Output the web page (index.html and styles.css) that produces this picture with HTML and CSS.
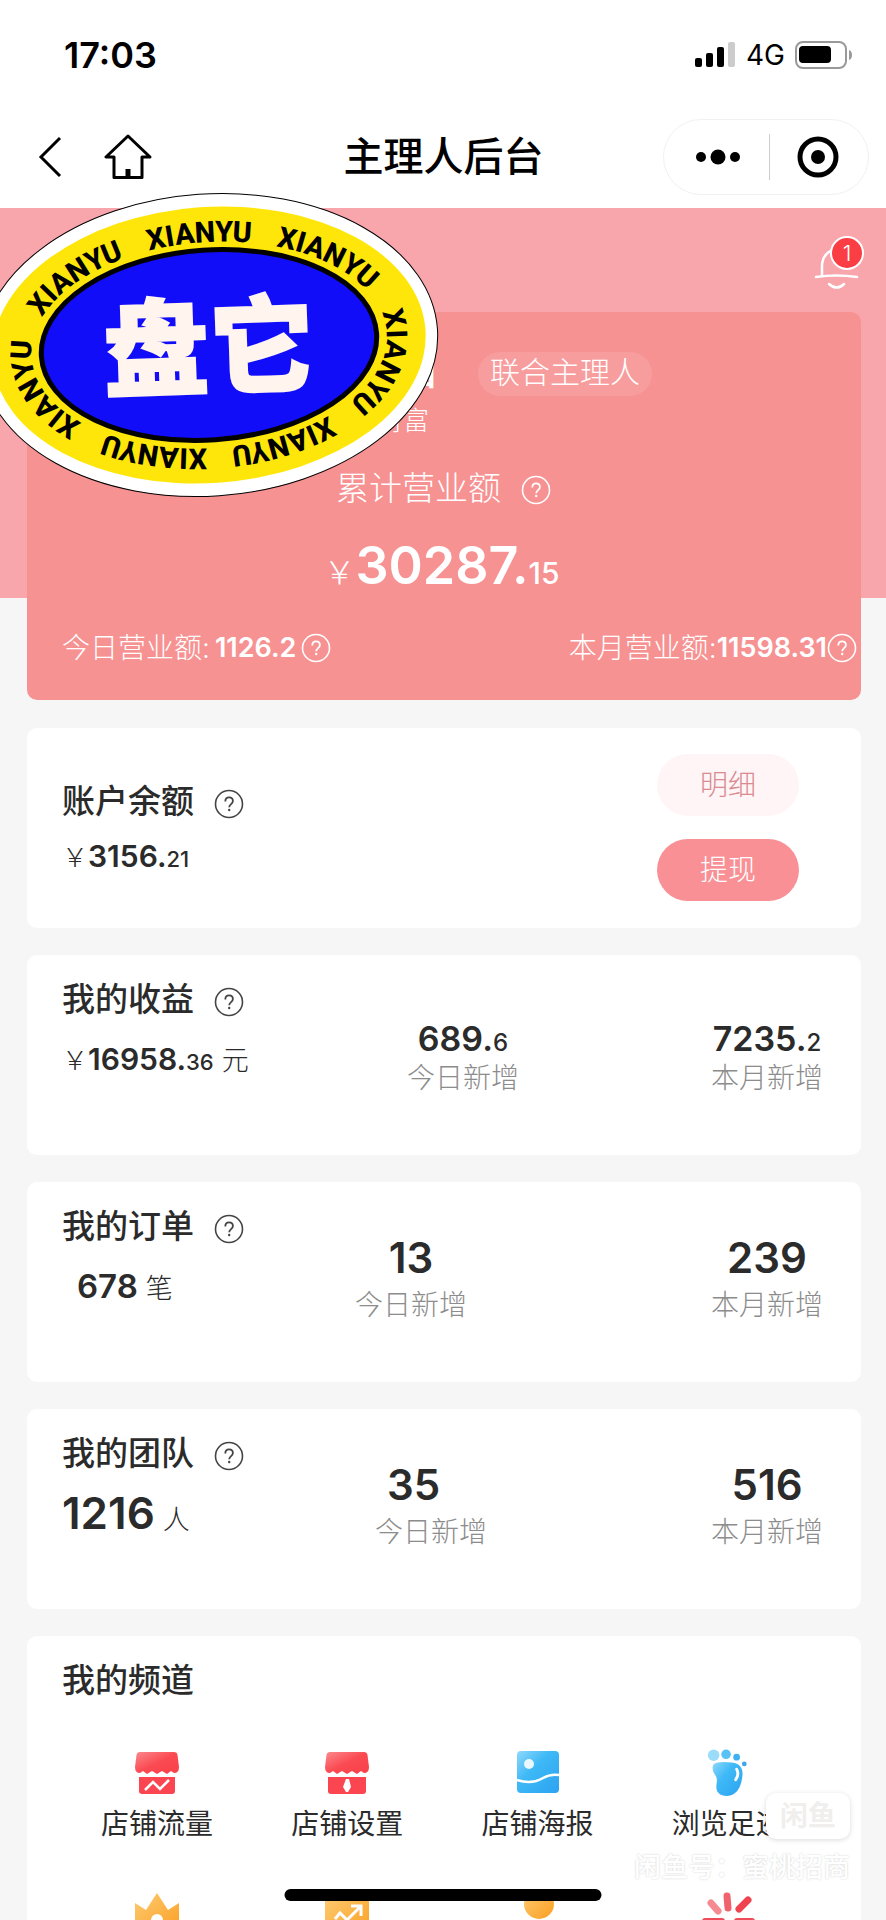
FILE: index.html
```html
<!DOCTYPE html>
<html lang="zh-CN">
<head>
    <meta charset="UTF-8">
    <meta name="viewport" content="width=device-width, initial-scale=1.0">
    <title>主理人后台</title>
    <link rel="stylesheet" href="styles.css">
</head>
<body>

    <!-- Shared icons -->
    <svg class="defs" width="0" height="0" aria-hidden="true">
        <defs>
            <linearGradient id="red" x1="0" y1="0" x2="1" y2="1">
                <stop offset="0" stop-color="#f98a8e"/>
                <stop offset="0.5" stop-color="#fb4a52"/>
                <stop offset="1" stop-color="#f8404a"/>
            </linearGradient>
            <linearGradient id="blue" x1="0" y1="0" x2="1" y2="1">
                <stop offset="0" stop-color="#8fd8fb"/>
                <stop offset="0.4" stop-color="#3fb9f6"/>
                <stop offset="1" stop-color="#2ba2f2"/>
            </linearGradient>
            <linearGradient id="gold" x1="0" y1="0" x2="1" y2="1">
                <stop offset="0" stop-color="#fdcb72"/>
                <stop offset="1" stop-color="#fb9f22"/>
            </linearGradient>
            <symbol id="help" viewBox="0 0 30 30">
                <circle cx="15" cy="15" r="13.5" fill="none" stroke="currentColor" stroke-width="1.6"/>
                <path d="M11.3 12.4c0-2.4 1.5-4 3.8-4s3.8 1.5 3.8 3.6c0 3-3.7 3.2-3.7 6.3" fill="none" stroke="currentColor" stroke-width="1.8"/>
                <circle cx="15.2" cy="21" r="1.2" fill="currentColor"/>
            </symbol>
        </defs>
    </svg>

    <div class="app">

        <!-- Status bar -->
        <div class="status-bar">
            <span class="time">17:03</span>
            <div class="status-right">
                <svg width="42" height="26" viewBox="0 0 42 26">
                    <rect x="1" y="16" width="7" height="9" rx="2"/>
                    <rect x="12" y="11" width="7" height="14" rx="2"/>
                    <rect x="23" y="5" width="7" height="20" rx="2"/>
                    <rect x="34" y="0" width="7" height="25" rx="2" fill="#ccc"/>
                </svg>
                <span class="network">4G</span>
                <svg width="58" height="28" viewBox="0 0 58 28">
                    <rect x="1" y="1" width="50" height="26" rx="7" fill="none" stroke="#999" stroke-width="2"/>
                    <rect x="4" y="5" width="32" height="17" rx="4"/>
                    <path d="M54 9c4 1 4 9 0 10z" fill="#999"/>
                </svg>
            </div>
        </div>

        <!-- Navigation -->
        <header class="nav">
            <div class="nav-left">
                <button class="icon-btn" aria-label="返回">
                    <svg width="24" height="42" viewBox="0 0 24 42" fill="none" stroke="#000" stroke-width="3">
                        <path d="M22 2 3 21l19 19"/>
                    </svg>
                </button>
                <button class="icon-btn" aria-label="首页">
                    <svg width="48" height="46" viewBox="0 0 48 46" fill="none" stroke="#000" stroke-width="3" stroke-linejoin="round">
                        <path d="M24 2 2 23h8v20.500h28V23h8z"/>
                        <path d="M24 35v8" stroke-width="5"/>
                    </svg>
                </button>
            </div>
            <h1>主理人后台</h1>
            <div class="capsule">
                <button class="icon-btn" aria-label="更多">
                    <svg width="46" height="16" viewBox="0 0 46 16">
                        <circle cx="6" cy="8" r="5"/>
                        <circle cx="23" cy="8" r="7.500"/>
                        <circle cx="40" cy="8" r="5"/>
                    </svg>
                </button>
                <span class="capsule-line"></span>
                <button class="icon-btn" aria-label="关闭">
                    <svg width="42" height="42" viewBox="0 0 42 42">
                        <circle cx="21" cy="21" r="18" fill="none" stroke="#000" stroke-width="5"/>
                        <circle cx="21" cy="21" r="7"/>
                    </svg>
                </button>
            </div>
        </header>

        <main>
            <div class="banner">
                <button class="bell icon-btn" aria-label="消息">
                    <svg width="46" height="42" viewBox="0 0 46 42" fill="none" stroke="#fff" stroke-width="2.500" stroke-linecap="round">
                        <path d="M2 29q20-3 41 0"/>
                        <path d="M8 27V18C8 9 14 2 22 2"/>
                        <path d="M15 36q8 7 15 0"/>
                    </svg>
                    <span class="bell-count">1</span>
                </button>
            </div>

            <!-- Total revenue -->
            <section class="hero">
                <div class="profile">
                    <b class="profile-name">目</b>
                    <span class="role">联合主理人</span>
                </div>
                <p class="motto">财富</p>
                <h2 class="hero-title">累计营业额 <svg class="help"><use href="#help"/></svg></h2>
                <p class="hero-amount"><span class="yen">&#65509;</span><b>30287.</b><small>15</small></p>
                <div class="hero-row">
                    <span class="today">今日营业额:<b>1126.2</b><svg class="help"><use href="#help"/></svg></span>
                    <span>本月营业额:<b>11598.31</b><svg class="help"><use href="#help"/></svg></span>
                </div>
            </section>

            <!-- Balance -->
            <section class="card balance">
                <div>
                    <h2>账户余额 <svg class="help"><use href="#help"/></svg></h2>
                    <p class="amount"><span class="yen">&#65509;</span><b>3156.</b><small>21</small></p>
                </div>
                <div class="balance-btns">
                    <button class="btn btn-light">明细</button>
                    <button class="btn">提现</button>
                </div>
            </section>

            <!-- Income -->
            <section class="card income">
                <div class="card-main">
                    <h2>我的收益 <svg class="help"><use href="#help"/></svg></h2>
                    <p class="amount"><span class="yen">&#65509;</span><b>16958.</b><small>36</small><span class="unit">元</span></p>
                </div>
                <div class="stat stat-decimal">
                    <p class="num">689.<small>6</small></p>
                    <p class="label">今日新增</p>
                </div>
                <div class="stat stat-decimal stat-month">
                    <p class="num">7235.<small>2</small></p>
                    <p class="label">本月新增</p>
                </div>
            </section>

            <!-- Orders -->
            <section class="card orders">
                <div class="card-main">
                    <h2>我的订单 <svg class="help"><use href="#help"/></svg></h2>
                    <p class="amount"><b>678</b><span class="unit">笔</span></p>
                </div>
                <div class="stat">
                    <p class="num">13</p>
                    <p class="label">今日新增</p>
                </div>
                <div class="stat stat-month">
                    <p class="num">239</p>
                    <p class="label">本月新增</p>
                </div>
            </section>

            <!-- Team -->
            <section class="card team">
                <div class="card-main">
                    <h2>我的团队 <svg class="help"><use href="#help"/></svg></h2>
                    <p class="amount"><b>1216</b><span class="unit">人</span></p>
                </div>
                <div class="stat stat-left">
                    <p class="num">35</p>
                    <p class="label">今日新增</p>
                </div>
                <div class="stat stat-month">
                    <p class="num">516</p>
                    <p class="label">本月新增</p>
                </div>
            </section>

            <!-- Channels -->
            <section class="card channels">
                <h2>我的频道</h2>
                <div class="channel-grid">
                    <a class="channel" href="#traffic">
                        <svg viewBox="0 0 46 46">
                            <path d="M6 2h34q3 0 3.500 3L45 17q0 6-5 6l-3-2-4 3-5-3-5 3-5-3-5 3-4-3-3 2q-5 0-5-6L2.500 5Q3 2 6 2z" fill="url(#red)"/>
                            <path d="M5 27h36v14q0 3-3 3H8q-3 0-3-3z" fill="#fb4651"/>
                            <path d="m11 40 8-8 7 7 9-9" fill="none" stroke="#fff" stroke-width="2.500"/>
                        </svg>
                        店铺流量
                    </a>
                    <a class="channel" href="#settings">
                        <svg viewBox="0 0 46 46">
                            <path d="M6 2h34q3 0 3.500 3L45 17q0 6-5 6l-3-2-4 3-5-3-5 3-5-3-5 3-4-3-3 2q-5 0-5-6L2.500 5Q3 2 6 2z" fill="url(#red)"/>
                            <path d="M4 27h38v14q0 3-3 3H7q-3 0-3-3z" fill="#fb4651"/>
                            <path d="M22 29h3l2 8-3 5h-2l-3-5z" fill="#fff"/>
                        </svg>
                        店铺设置
                    </a>
                    <a class="channel" href="#poster">
                        <svg viewBox="0 0 46 46">
                            <rect x="2" y="1" width="42" height="42" rx="4" fill="url(#blue)"/>
                            <circle cx="14" cy="14" r="5" fill="#e9f8fe"/>
                            <path d="M2 30c9 3 18 3 26-2 5-3 10-4 16-3" fill="none" stroke="#fff" stroke-width="2.500"/>
                        </svg>
                        店铺海报
                    </a>
                    <a class="channel" href="#history">
                        <svg viewBox="0 0 46 48">
                            <circle cx="8" cy="5.500" r="6" fill="#9bdcf9"/>
                            <circle cx="21" cy="4.500" r="5" fill="#58c1f5"/>
                            <circle cx="32" cy="7.500" r="3.500" fill="#3fb0f2"/>
                            <circle cx="40" cy="14.500" r="2.500" fill="#3fa6ea"/>
                            <path d="M8 15c3-3 12-3 19-2 9 1 12 7 11 14-1 11-6 21-16 21-9 0-12-5-11-12 1-6 0-8-2-11-2-2-3-8-1-10z" fill="url(#blue)"/>
                            <path d="M32 20q3 5-1 11" fill="none" stroke="#fff" stroke-width="3" stroke-linecap="round"/>
                        </svg>
                        浏览足迹
                    </a>
                    <a class="channel" href="#member" aria-label="会员">
                        <svg viewBox="0 0 46 46">
                            <path d="m1 11 11 7L23 1l11 17 11-7v30H1z" fill="url(#gold)"/>
                            <circle cx="23" cy="28" r="6" fill="#fff"/>
                        </svg>
                    </a>
                    <a class="channel" href="#growth" aria-label="增长">
                        <svg viewBox="0 0 46 46">
                            <rect x="1" y="3" width="44" height="42" rx="3" fill="url(#gold)"/>
                            <path d="m11 27 5-6 7 7 14-14M27 14h10v10" fill="none" stroke="#fff" stroke-width="3"/>
                        </svg>
                    </a>
                    <a class="channel" href="#friends" aria-label="好友">
                        <svg viewBox="0 0 46 46">
                            <circle cx="24" cy="12" r="15" fill="url(#gold)"/>
                            <path d="M3 45q20-26 40 0z" fill="#fb9f22"/>
                        </svg>
                    </a>
                    <a class="channel" href="#activity" aria-label="活动">
                        <svg viewBox="0 0 46 46" fill="none" stroke-linecap="round" stroke-width="7">
                            <path d="m6 11 7 8" stroke="#f58a90"/>
                            <path d="m22 4 1 12" stroke="#f0626c"/>
                            <path d="m43 8-9 9" stroke="#ef4450"/>
                            <path d="M0 29h17M32 29h15" stroke="#ee4c58" stroke-width="6"/>
                        </svg>
                    </a>
                </div>
            </section>
        </main>

        <!-- Sticker -->
        <svg class="sticker" width="464" height="310" viewBox="-232 -155 464 310">
            <defs>
                <path id="ring" d="M0 103A178 103 0 0 1 0-103A178 103 0 0 1 0 103"/>
            </defs>
            <g transform="rotate(-4)">
                <ellipse rx="229" ry="151" fill="#fff" stroke="#000"/>
                <ellipse rx="217" ry="138" fill="#ffe60a"/>
                <ellipse rx="168" ry="95" fill="#110df8" stroke="#000" stroke-width="5"/>
                <g class="ring-text">
                    <text><textPath href="#ring" startOffset="61">XIANYU</textPath></text>
                    <text><textPath href="#ring" startOffset="190">XIANYU</textPath></text>
                    <text><textPath href="#ring" startOffset="318">XIANYU</textPath></text>
                    <text><textPath href="#ring" startOffset="447">XIANYU</textPath></text>
                    <text><textPath href="#ring" startOffset="575">XIANYU</textPath></text>
                    <text><textPath href="#ring" startOffset="704">XIANYU</textPath></text>
                    <text><textPath href="#ring" startOffset="832">XIANYU</textPath></text>
                </g>
                <text class="sticker-text" x="0" y="41" transform="rotate(2)">盘它</text>
            </g>
        </svg>

        <div class="watermark">
            <span class="watermark-logo">闲鱼</span>
            <span class="watermark-id">闲鱼号：蜜桃招商</span>
        </div>

        <div class="home-bar"></div>
    </div>

</body>
</html>
```
FILE: styles.css
```css
/* General Reset */
* {
    margin: 0;
    padding: 0;
    box-sizing: border-box;
}

body {
    font-family: Inter, "Noto Sans CJK SC", sans-serif;
    font-size: 28px;
    font-weight: 300;
    line-height: 40px;
    color: #2b2b2b;
    background-color: #f6f6f6;
}

button {
    font: inherit;
    border: none;
    background: none;
    cursor: pointer;
}

svg {
    display: block;
    flex: none;
}

.defs {
    position: absolute;
}

.app {
    position: relative;
    height: 100vh;
    overflow: hidden;
}

/* Status Bar */
.status-bar {
    display: flex;
    justify-content: space-between;
    align-items: center;
    height: 110px;
    padding: 0 33px 0 64px;
    background-color: #fff;
    color: #000;
}

.time {
    font-size: 36px;
    font-weight: 600;
}

.status-right {
    display: flex;
    align-items: center;
    gap: 10px;
}

.network {
    font-size: 28px;
    font-weight: 400;
}

/* Navigation */
.nav {
    display: grid;
    grid-template-columns: 1fr auto 1fr;
    align-items: center;
    height: 98px;
    padding: 0 17px 4px 38px;
    background-color: #fff;
    color: #000;
}

.nav h1 {
    padding-right: 20px;
    font-size: 40px;
    font-weight: 500;
}

.nav-left {
    display: flex;
    align-items: center;
    gap: 42px;
}

.icon-btn {
    display: flex;
}

.capsule {
    display: flex;
    align-items: center;
    justify-content: space-between;
    justify-self: end;
    width: 206px;
    height: 76px;
    padding: 0 29px 0 31px;
    border: 1px solid #f1f1f1;
    border-radius: 38px;
}

.capsule-line {
    width: 1px;
    height: 46px;
    background-color: #ccc;
}

/* Banner */
.banner {
    display: flex;
    justify-content: flex-end;
    height: 390px;
    padding: 36px 26px;
    background-color: #f8a5ac;
}

.bell {
    position: relative;
    align-self: flex-start;
    padding-top: 4px;
}

.bell-count {
    position: absolute;
    top: -8px;
    right: -4px;
    width: 34px;
    height: 34px;
    border: 2px solid #fff;
    border-radius: 50%;
    background-color: #fa3e44;
    color: #fff;
    font-size: 22px;
    line-height: 30px;
}

.help {
    width: 30px;
    height: 30px;
}

/* Revenue card */
.hero {
    margin: -286px 25px 28px 27px;
    padding: 40px 4px 32px 35px;
    border-radius: 10px;
    background-color: #f79293;
    color: #fff;
}

.profile {
    display: flex;
    align-items: center;
    gap: 40px;
    padding-left: 344px;
}

.profile-name {
    font-size: 32px;
    font-weight: 700;
}

.role {
    height: 44px;
    padding: 0 12px;
    border-radius: 22px;
    background-color: rgba(255, 255, 255, 0.1);
    font-size: 30px;
    line-height: 40px;
}

.motto {
    padding-left: 315px;
    font-size: 26px;
    line-height: 50px;
}

.hero-title {
    display: flex;
    align-items: center;
    justify-content: center;
    gap: 20px;
    margin: 22px 32px 0 0;
    font-size: 33px;
    font-weight: 300;
}

.hero-title .help {
    margin-top: 4px;
}

.hero-amount {
    display: flex;
    align-items: baseline;
    justify-content: center;
    margin: 28px 36px 0 0;
    line-height: 60px;
}

.hero-amount b {
    font-size: 52px;
    font-weight: 600;
}

.hero-amount small {
    font-size: 30px;
    font-weight: 500;
}

.hero-amount .yen {
    font-size: 32px;
}

.hero-row {
    display: flex;
    justify-content: space-between;
    margin-top: 25px;
}

.hero-row span {
    display: flex;
    align-items: center;
}

.hero-row b {
    font-size: 27px;
    font-weight: 600;
}

.hero-row .today b {
    margin: 0 5px;
}

/* Cards */
.card {
    display: flex;
    min-height: 200px;
    margin: 0 25px 27px 27px;
    padding: 26px 38px 0 35px;
    border-radius: 10px;
    background-color: #fff;
}

.card h2 {
    display: flex;
    align-items: center;
    gap: 20px;
    height: 36px;
    font-size: 33px;
    font-weight: 500;
    line-height: 36px;
}

.card h2 .help {
    margin-top: 6px;
    color: #444;
}

.amount {
    display: flex;
    align-items: baseline;
    margin-top: 22px;
}

.amount b {
    font-size: 30px;
    font-weight: 600;
}

.amount small {
    font-size: 22px;
    font-weight: 500;
}

.yen {
    font-family: "Noto Sans CJK SC", sans-serif;
    font-size: 26px;
}

.unit {
    margin-left: 8px;
    font-size: 27px;
}

.stat {
    padding-top: 26px;
    text-align: center;
}

.stat-month {
    margin-left: auto;
}

.num {
    height: 51px;
    font-size: 42px;
    font-weight: 600;
    line-height: 48px;
}

.stat-decimal .num {
    padding-top: 13px;
    font-size: 34px;
    line-height: 38px;
}

.stat-left .num {
    padding-left: 12px;
    text-align: left;
}

.num small {
    font-size: 24px;
    font-weight: 500;
}

.label {
    color: #8c8c8c;
}

/* Balance */
.balance {
    justify-content: space-between;
    padding-right: 62px;
}

.balance h2 {
    margin-top: 29px;
}

.balance .amount {
    margin-top: 17px;
}

.balance-btns {
    display: flex;
    flex-direction: column;
    gap: 23px;
}

.btn {
    width: 142px;
    height: 62px;
    border-radius: 31px;
    background-color: #f89095;
    color: #fff;
}

.btn-light {
    background-color: #fff5f6;
    color: #d98a92;
}

.income .card-main {
    flex: 0 0 345px;
}

.orders .card-main {
    flex: 0 0 293px;
}

.orders .amount {
    padding-left: 15px;
}

.orders .amount b {
    font-size: 33px;
}

.team .card-main {
    flex: 0 0 313px;
}

.team .amount b {
    font-size: 44px;
}

/* Channels */
.channels {
    flex-direction: column;
}

.channel-grid {
    display: grid;
    grid-template-columns: repeat(4, 1fr);
    row-gap: 48px;
    margin-top: 52px;
}

.channel {
    display: flex;
    flex-direction: column;
    align-items: center;
    gap: 8px;
    color: #2b2b2b;
    font-weight: 400;
    text-decoration: none;
}

.channel svg {
    width: 46px;
    height: 46px;
    overflow: visible;
}

/* Sticker */
.sticker {
    position: absolute;
    top: 190px;
    left: -23px;
}

.ring-text {
    font-family: Roboto, sans-serif;
    font-size: 29px;
    font-weight: 800;
    text-anchor: middle;
}

.sticker-text {
    fill: #fff5ee;
    stroke: #fff5ee;
    stroke-width: 2px;
    font-size: 106px;
    font-weight: 900;
    text-anchor: middle;
}

/* Watermark */
.watermark {
    position: absolute;
    right: 36px;
    bottom: 32px;
    display: flex;
    flex-direction: column;
    align-items: flex-end;
    gap: 9px;
}

.watermark-logo {
    padding: 0 14px;
    border-radius: 10px;
    background-color: #fff;
    box-shadow: 0 1px 5px rgba(0, 0, 0, 0.15);
    color: #f1eeee;
    font-size: 28px;
    font-weight: 700;
    line-height: 46px;
}

.watermark-id {
    color: #fff;
    font-size: 27px;
    font-weight: 500;
    text-shadow: 0 0 2px #ccc;
}

/* Home indicator */
.home-bar {
    position: absolute;
    bottom: 19px;
    left: 50%;
    width: 317px;
    height: 12px;
    border-radius: 6px;
    background-color: #000;
    transform: translateX(-50%);
}
```
